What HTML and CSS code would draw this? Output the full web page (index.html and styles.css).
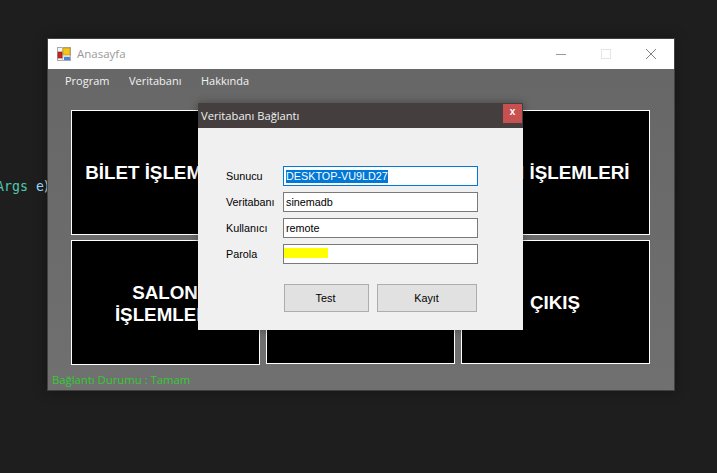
FILE: index.html
```html
<!DOCTYPE html>
<html>
<head>
    <title>Anasayfa</title>
    <link rel="stylesheet" href="styles.css">
</head>
<body>
    <div class="code"><span class="code-type">Args</span> <span class="code-var">e</span>)</div>

    <div class="window">
        <div class="titlebar">
            <svg class="app-icon" width="14" height="14" viewBox="0 0 14 14">
                <rect x="0.5" y="0.5" width="13" height="13" fill="#f4f4f4" stroke="#a8a8a8"/>
                <path d="M5.5 0V14M0 5.5H6M6 10H14" stroke="#c4c4c4" fill="none"/>
                <rect x="6" y="1" width="7" height="7" fill="#f5c518" stroke="#b98a10" stroke-width="0.6"/>
                <rect x="1" y="5" width="4" height="6" fill="#c8281e" stroke="#7e1a14" stroke-width="0.6"/>
                <rect x="7" y="10" width="6" height="3" fill="#4a86dc"/>
            </svg>
            <span class="window-title">Anasayfa</span>
            <div class="controls">
                <svg class="ctl" width="10" height="10" viewBox="0 0 10 10"><path d="M0 5.5H10" stroke="#999"/></svg>
                <svg class="ctl" width="10" height="10" viewBox="0 0 10 10"><rect x="0.5" y="0.5" width="9" height="9" fill="none" stroke="#e5e5e5"/></svg>
                <svg class="ctl" width="10" height="10" viewBox="0 0 10 10"><path d="M0 0L10 10M10 0L0 10" stroke="#808080"/></svg>
            </div>
        </div>

        <div class="menu">
            <span>Program</span>
            <span>Veritabanı</span>
            <span>Hakkında</span>
        </div>

        <div class="tiles">
            <div class="tile">BİLET İŞLEMLERİ</div>
            <div class="tile"></div>
            <div class="tile">FİLM İŞLEMLERİ</div>
            <div class="tile tile-wrap">SALON İŞLEMLERİ</div>
            <div class="tile tile-low"></div>
            <div class="tile tile-low">ÇIKIŞ</div>
        </div>

        <div class="status">Bağlantı Durumu : Tamam</div>
    </div>

    <div class="dialog">
        <div class="dialog-head">
            <span>Veritabanı Bağlantı</span>
            <div class="dialog-close">x</div>
        </div>
        <div class="dialog-body">
            <div class="form">
                <label>Sunucu</label>
                <div class="field field-active"><span class="selected">DESKTOP-VU9LD27</span></div>
                <label>Veritabanı</label>
                <div class="field">sinemadb</div>
                <label>Kullanıcı</label>
                <div class="field">remote</div>
                <label>Parola</label>
                <div class="field"><div class="redacted"></div></div>
            </div>
            <div class="buttons">
                <button class="btn-test">Test</button>
                <button class="btn-save">Kayıt</button>
            </div>
        </div>
    </div>
</body>
</html>
```

FILE: styles.css
```css
html, body {
    height: 100%;
}
body {
    margin: 0;
    background-color: #1e1e1e;
    overflow: hidden;
    position: relative;
    font-family: "Liberation Sans", Arial, sans-serif;
}
.code {
    position: absolute;
    left: -4px;
    top: 178px;
    font-family: "DejaVu Sans Mono", monospace;
    font-size: 13.3px;
    line-height: 17px;
    color: #dcdcdc;
    white-space: pre;
}
.code-type {
    color: #4ec9b0;
}
.code-var {
    color: #9cdcfe;
    letter-spacing: -1.5px;
}
.window {
    position: absolute;
    left: 47px;
    top: 38px;
    width: 626px;
    height: 351px;
    border: 1px solid #414141;
    background: linear-gradient(#666666, #707070);
    box-shadow: 0 0 12px rgba(0, 0, 0, 0.35);
}
.titlebar {
    height: 30px;
    background-color: #fff;
    display: flex;
    align-items: center;
    padding-left: 9px;
}
.app-icon {
    margin-top: -1px;
}
.window-title {
    margin: -1px 0 0 6px;
    font-family: "Open Sans", sans-serif;
    font-size: 11.5px;
    color: #9a9a9a;
}
.controls {
    margin-left: auto;
    display: flex;
    gap: 35px;
    padding-right: 18px;
}
.ctl {
    display: block;
}
.menu {
    box-sizing: border-box;
    height: 24px;
    padding: 0 0 2px 17px;
    display: flex;
    align-items: center;
    gap: 19.5px;
    font-family: "Open Sans", sans-serif;
    font-size: 11px;
    color: #f2f2f2;
}
.tiles {
    display: grid;
    grid-template-columns: 189px 189px 189px;
    grid-template-rows: 125px 125px;
    gap: 5px 6px;
    margin: 17px 0 0 23px;
}
.tile {
    box-sizing: border-box;
    background-color: #000;
    border: 1px solid #fff;
    color: #fff;
    font-size: 18.8px;
    font-weight: bold;
    line-height: 22px;
    padding-right: 1px;
    display: flex;
    align-items: center;
    justify-content: center;
    text-align: center;
}
.tile-wrap {
    padding: 2px 41px 0 40px;
}
.tile-low {
    height: 124px;
    padding-top: 2px;
}
.status {
    margin: 8px 0 0 4px;
    font-family: "Open Sans", sans-serif;
    font-size: 11.3px;
    line-height: 14px;
    color: #32cd32;
}
.dialog {
    position: absolute;
    left: 198px;
    top: 103px;
    width: 325px;
    height: 227px;
    background-color: #f0f0f0;
    box-shadow: 0 0 8px rgba(0, 0, 0, 0.35);
}
.dialog-head {
    height: 25px;
    background-color: #443f3e;
    color: #f0f0f0;
    font-family: "Open Sans", sans-serif;
    font-size: 11.2px;
    display: flex;
    align-items: center;
    justify-content: space-between;
    padding: 0 1px 0 3px;
}
.dialog-close {
    width: 19px;
    height: 19px;
    margin-top: -4px;
    background-color: #c75050;
    color: #fff;
    font-family: "Liberation Mono", monospace;
    font-size: 10px;
    font-weight: bold;
    line-height: 18px;
    text-align: center;
}
.dialog-body {
    padding: 38px 0 0 28px;
    font-size: 10.8px;
    color: #000;
}
.form {
    display: grid;
    grid-template-columns: 57px 195px;
    grid-auto-rows: 20px;
    row-gap: 6px;
    align-items: center;
}
.field {
    box-sizing: border-box;
    height: 20px;
    border: 1px solid #7a7a7a;
    background-color: #fff;
    padding: 0 2px;
    line-height: 18px;
    color: #000;
}
.field-active {
    border-color: #0078d7;
}
.selected {
    background-color: #0078d7;
    color: #fff;
    display: inline-block;
    height: 13px;
    line-height: 13px;
}
.redacted {
    width: 44px;
    height: 10px;
    margin: 3px 0 0 -2px;
    background-color: #ffff00;
}
.buttons {
    display: flex;
    gap: 8px;
    margin: 20px 0 0 58px;
}
button {
    box-sizing: border-box;
    height: 28px;
    border: 1px solid #adadad;
    background-color: #e1e1e1;
    font-family: "Liberation Sans", Arial, sans-serif;
    font-size: 10.8px;
    color: #000;
    padding: 0 1px 0 0;
}
.btn-test {
    width: 85px;
    padding-right: 2px;
}
.btn-save {
    width: 100px;
}
```
